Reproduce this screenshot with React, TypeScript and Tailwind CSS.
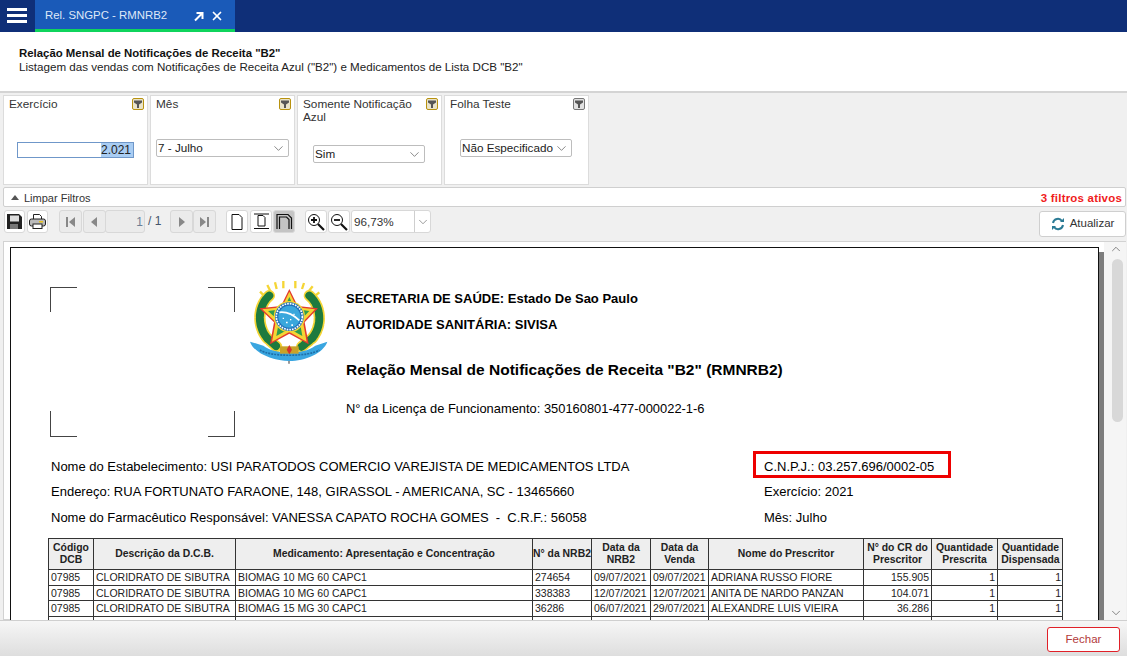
import React from "react";
import { X, ChevronDown, ChevronUp } from "lucide-react";

function Funnel({ on }: { on: boolean }) {
  return (
    <div className={`absolute right-[3px] top-[2px] w-[12px] h-[12px] rounded-[2px] border flex items-center justify-center ${on ? "border-[#b8920f] bg-[#e9e3c9]" : "border-[#777] bg-[#e2e2e2]"}`}>
      <svg width="8" height="8" viewBox="0 0 8 8"><path d="M0 0.5h8v2L5 4.5V8H3V4.5L0 2.5z" fill="#555" /></svg>
    </div>
  );
}

function Select({ label, className }: { label: string; className: string }) {
  return (
    <div className={`absolute h-[18px] bg-white border border-[#bdbdbd] rounded-[2px] flex items-center justify-between pl-[1px] pr-[2px] text-[11.7px] text-[#222] ${className}`}>
      <span className="whitespace-nowrap">{label}</span>
      <ChevronDown size={15} strokeWidth={1} className="text-[#444] shrink-0" />
    </div>
  );
}

function Card({ className, on, title, children }: { className: string; on: boolean; title: React.ReactNode; children: React.ReactNode }) {
  return (
    <div className={`absolute top-[95px] h-[90px] bg-white border border-[#dcdcdc] ${className}`}>
      <div className="absolute left-[5px] top-[2px] text-[11.8px] leading-[13px] text-[#333] w-[120px]">{title}</div>
      <Funnel on={on} />
      {children}
    </div>
  );
}

function Btn({ className, children, dim }: { className: string; children: React.ReactNode; dim?: boolean }) {
  return (
    <div className={`absolute top-[210px] h-[23px] rounded-[3px] border border-[#d8d8d8] flex items-center justify-center ${dim ? "bg-[#ebebeb]" : "bg-white"} ${className}`}>
      {children}
    </div>
  );
}

const cols = ["w-[45px]", "w-[142px]", "w-[297px]", "w-[59px]", "w-[59px]", "w-[58px]", "w-[155px]", "w-[68px]", "w-[66px]", "w-[65px]"];
const head = ["Código DCB", "Descrição da D.C.B.", "Medicamento: Apresentação e Concentração", "N° da NRB2", "Data da NRB2", "Data da Venda", "Nome do Prescritor", "N° do CR do Prescritor", "Quantidade Prescrita", "Quantidade Dispensada"];
const rows = [
  ["07985", "CLORIDRATO DE SIBUTRA", "BIOMAG 10 MG 60 CAPC1", "274654", "09/07/2021", "09/07/2021", "ADRIANA RUSSO FIORE", "155.905", "1", "1"],
  ["07985", "CLORIDRATO DE SIBUTRA", "BIOMAG 10 MG 60 CAPC1", "338383", "12/07/2021", "12/07/2021", "ANITA DE NARDO PANZAN", "104.071", "1", "1"],
  ["07985", "CLORIDRATO DE SIBUTRA", "BIOMAG 15 MG 30 CAPC1", "36286", "06/07/2021", "29/07/2021", "ALEXANDRE LUIS VIEIRA", "36.286", "1", "1"],
  ["07985", "CLORIDRATO DE SIBUTRA", "BIOMAG 10 MG 60 CAPC1", "350067", "14/07/2021", "14/07/2021", "NICACIO DALLO", "67.400", "1", "1"],
];

function Emblem() {
  return (
    <svg className="absolute left-[230px] top-[275px]" width="100" height="95" viewBox="0 0 300 285">
      <path d="M122 50 L112 30 M140 42 L135 22 M160 40 L160 18 M196 40 L196 18 M216 42 L222 24 M235 50 L248 34 M105 65 L90 50 M252 65 L268 52" stroke="#f5d535" strokeWidth="7" />
      <path d="M118 62 C85 90 78 150 112 190 L140 215" stroke="#f5d535" strokeWidth="34" fill="none" strokeLinecap="round" strokeDasharray="14 5" />
      <path d="M238 62 C272 90 280 150 246 190 L215 215" stroke="#f5d535" strokeWidth="34" fill="none" strokeLinecap="round" strokeDasharray="14 5" />
      <path d="M118 62 C85 90 78 150 112 190 L140 215" stroke="#1d7a3e" strokeWidth="24" fill="none" strokeLinecap="round" strokeDasharray="11 4" />
      <path d="M238 62 C272 90 280 150 246 190 L215 215" stroke="#1d7a3e" strokeWidth="24" fill="none" strokeLinecap="round" strokeDasharray="11 4" />
      <path d="M178 42 L203 93 L264 100 L224 142 L236 208 L178 176 L120 208 L132 142 L88 100 L153 93 Z" fill="#e33b2e" />
      <path d="M178 50 L200 97 L255 103 L219 141 L230 200 L178 171 L126 200 L137 141 L97 103 L156 97 Z" fill="#f5d535" />
      <path d="M178 66 L194 102 L238 108 L209 138 L217 183 L178 161 L139 183 L147 138 L114 108 L162 102 Z" fill="#2f9e4d" />
      <circle cx="178" cy="125" r="47" fill="#f5d535" />
      <circle cx="178" cy="125" r="43" fill="#1f6fb8" />
      <circle cx="178" cy="125" r="39" fill="none" stroke="#fff" strokeWidth="5" strokeDasharray="5 3" />
      <circle cx="178" cy="125" r="33" fill="#39a7dc" />
      <path d="M148 112 Q178 108 208 136" stroke="#fff" strokeWidth="5" fill="none" />
      <path d="M168 140h5v5h-5z M184 148h5v5h-5z M190 116h4v4h-4z M158 128h4v4h-4z M180 132h4v4h-4z" fill="#fff" />
      <path d="M60 200 L100 212 C120 228 150 232 178 232 C206 232 236 228 256 212 L292 200 C280 235 225 258 178 258 C130 258 72 235 60 200 Z" fill="#3aa6e0" />
      <path d="M90 225 C120 246 236 246 268 225" stroke="#1e6fa8" strokeWidth="5" fill="none" strokeDasharray="6 3" />
      <rect x="150" y="214" width="56" height="22" fill="#c9a227" />
      <path d="M178 210 L186 224 L178 238 L170 224 Z" fill="#d5342b" />
      <path d="M174 258h6v8h-6z" fill="#999" />
    </svg>
  );
}

export default function App() {
  const line = "absolute bg-[#444]";
  return (
    <div className="relative w-[1127px] h-[656px] overflow-hidden bg-[#f0f0f0] [font-family:Liberation_Sans,Arial,sans-serif]">
      {/* top bar */}
      <div className="absolute left-0 top-0 w-full h-[32px] bg-[#0f2f78]">
        <div className="absolute left-[7px] top-[8px] w-[20px] flex flex-col gap-[3px]">
          <div className="h-[3px] bg-white" /><div className="h-[3px] bg-white" /><div className="h-[3px] bg-white" />
        </div>
        <div className="absolute left-[35px] top-0 w-[200px] h-[32px] bg-[#1a5ab8] border-b-[3px] border-[#0fd45c]">
          <span className="absolute left-[10px] top-[8px] text-[11.4px] leading-[14px] text-[#dfe8f7]">Rel. SNGPC - RMNRB2</span>
          <svg className="absolute left-[158px] top-[11px]" width="11" height="11" viewBox="0 0 11 11"><path d="M2 9.5 L8.5 3 M3.5 2 H9.5 V8" stroke="#fff" strokeWidth="2" fill="none" /></svg>
          <X size={14} strokeWidth={3} className="absolute left-[175px] top-[9px] text-white" />
        </div>
      </div>

      {/* subtitle */}
      <div className="absolute left-0 top-[32px] w-full h-[61px] bg-white border-b-2 border-[#d4d4d4]">
        <div className="absolute left-[19px] top-[14px] text-[11.4px] leading-[14px] font-bold text-[#111] whitespace-nowrap">Relação Mensal de Notificações de Receita "B2"</div>
        <div className="absolute left-[19px] top-[28px] text-[11.6px] leading-[14px] text-[#222] whitespace-nowrap">Listagem das vendas com Notificações de Receita Azul ("B2") e Medicamentos de Lista DCB "B2"</div>
      </div>

      {/* filters */}
      <Card className="left-[3px] w-[145px]" on title="Exercício">
        <div className="absolute left-[13px] top-[46px] w-[117px] h-[16px] border border-[#6f97c9] bg-white flex justify-end text-[12px] leading-[14px] text-[#222]">
          <span className="bg-[#a9cdf3] pr-[2px]">2.021</span>
        </div>
      </Card>
      <Card className="left-[150px] w-[145px]" on title="Mês">
        <Select label="7 - Julho" className="left-[5px] top-[43px] w-[133px]" />
      </Card>
      <Card className="left-[297px] w-[145px]" on title="Somente Notificação Azul">
        <Select label="Sim" className="left-[15px] top-[49px] w-[112px]" />
      </Card>
      <Card className="left-[444px] w-[145px]" on={false} title="Folha Teste">
        <Select label="Não Especificado" className="left-[15px] top-[43px] w-[112px]" />
      </Card>

      {/* limpar */}
      <div className="absolute left-[3px] top-[187px] w-[1123px] h-[20px] bg-white border border-[#cfcfcf] rounded-[2px] text-[11px]">
        <div className="absolute left-[7px] top-[7px] w-0 h-0 border-l-[4px] border-r-[4px] border-b-[5px] border-l-transparent border-r-transparent border-b-[#555]" />
        <span className="absolute left-[20px] top-[2px] text-[#333]">Limpar Filtros</span>
        <span className="absolute right-[3px] top-[2px] text-[11.5px] text-[#f01c1c] font-bold tracking-[0.2px]">3 filtros ativos</span>
      </div>

      {/* toolbar */}
      <Btn className="left-[4px] w-[21px]">
        <svg width="15" height="15" viewBox="0 0 15 15"><path d="M0 0h12l3 3v12H0z" fill="#222" /><rect x="3" y="1.5" width="9" height="6" fill="#ddd" /><rect x="3" y="10" width="8" height="5" fill="#777" /></svg>
      </Btn>
      <Btn className="left-[27px] w-[21px]">
        <svg width="17" height="15" viewBox="0 0 17 15"><path d="M4.5 5V.5h6l2 2V5" fill="#fff" stroke="#222" /><rect x="0.5" y="5" width="16" height="7" rx="2" fill="#bbb" stroke="#222" /><rect x="4" y="10" width="9" height="4.5" fill="#fff" stroke="#222" /><rect x="10" y="7" width="4" height="1.5" fill="#e6c21a" /></svg>
      </Btn>
      <Btn dim className="left-[59px] w-[23px]"><svg width="9" height="10" viewBox="0 0 9 10"><rect width="2" height="10" fill="#888" /><path d="M9 0v10L3 5z" fill="#888" /></svg></Btn>
      <Btn dim className="left-[83px] w-[23px]"><svg width="7" height="10" viewBox="0 0 7 10"><path d="M6 0v10L0 5z" fill="#888" /></svg></Btn>
      <Btn dim className="left-[105px] w-[40px] justify-end pr-[1px]"><span className="text-[12px] text-[#6d7f96]">1</span></Btn>
      <span className="absolute left-[148px] top-[214px] text-[12px] leading-[15px] text-[#44556b]">/ 1</span>
      <Btn dim className="left-[170px] w-[23px]"><svg width="7" height="10" viewBox="0 0 7 10"><path d="M1 0v10L7 5z" fill="#888" /></svg></Btn>
      <Btn dim className="left-[193px] w-[23px]"><svg width="9" height="10" viewBox="0 0 9 10"><path d="M0 0v10L6 5z" fill="#888" /><rect x="7" width="2" height="10" fill="#888" /></svg></Btn>
      <Btn className="left-[226px] w-[22px]"><svg width="12" height="16" viewBox="0 0 12 16"><path d="M1 .5h7l3 3V15.5H1z" fill="#fff" stroke="#111" /></svg></Btn>
      <Btn className="left-[250px] w-[22px]"><svg width="17" height="17" viewBox="0 0 17 17"><path d="M5 2.5h5l2 2V13H5z" fill="#fff" stroke="#111" /><path d="M1 1h15M1 15.5h15" stroke="#111" /></svg></Btn>
      <Btn className="left-[273px] w-[22px] !bg-[#c4c4c4]"><svg width="17" height="17" viewBox="0 0 17 17"><path d="M1 16V1.5H12L15.5 5V16" fill="none" stroke="#111" strokeWidth="1.2" /><path d="M3.5 16V4h7l2.5 2.5V16" fill="none" stroke="#111" strokeWidth="1.2" /></svg></Btn>
      <Btn className="left-[305px] w-[22px]"><svg width="18" height="18" viewBox="0 0 18 18"><circle cx="7" cy="7" r="5.5" fill="#fff" stroke="#111" /><path d="M4 7h6M7 4v6" stroke="#111" strokeWidth="1.8" /><path d="M11 11l6 6" stroke="#111" strokeWidth="2.2" /></svg></Btn>
      <Btn className="left-[328px] w-[22px]"><svg width="18" height="18" viewBox="0 0 18 18"><circle cx="7" cy="7" r="5.5" fill="#fff" stroke="#111" /><path d="M4 7h6" stroke="#111" strokeWidth="1.8" /><path d="M11 11l6 6" stroke="#111" strokeWidth="2.2" /></svg></Btn>
      <Btn className="left-[351px] w-[80px] justify-start pl-[2px]">
        <span className="text-[11.7px] text-[#333]">96,73%</span>
        <div className="absolute right-0 top-0 w-[16px] h-full border-l border-[#cfcfcf] flex items-center justify-center"><ChevronDown size={14} strokeWidth={1} className="text-[#555]" /></div>
      </Btn>
      <div className="absolute left-[1039px] top-[211px] w-[87px] h-[26px] bg-white border border-[#cfcfcf] rounded-[3px] flex items-center justify-center gap-[5px] text-[11.5px] text-[#333]">
        <svg width="14" height="14" viewBox="0 0 14 14" fill="none" stroke="#2a7a94" strokeWidth="2"><path d="M2 6a5 5 0 0 1 9-2" /><path d="M12 8a5 5 0 0 1-9 2" /><path d="M13 1v4H9z M1 13V9h4z" fill="#2a7a94" stroke="none" /></svg>
        <span>Atualizar</span>
      </div>

      {/* report viewer */}
      <div className="absolute left-[3px] top-[241px] w-[1123px] h-[379px] bg-white border border-[#d2d2d2]" />
      <div className="absolute left-[10px] top-[247px] w-[1089px] h-[373px] bg-white border-l border-t border-r border-[#111]" />
      <div className="absolute left-[1099px] top-[252px] w-[5px] h-[368px] bg-[#7d7d7d]" />
      <div className="absolute left-[1104px] top-[242px] w-[22px] h-[378px] bg-[#f5f5f5]">
        <ChevronUp size={14} strokeWidth={1.2} className="absolute left-[5px] top-[0px] text-[#555]" />
        <div className="absolute left-[8px] top-[17px] w-[11px] h-[163px] rounded-[6px] bg-[#d8d8d8]" />
        <ChevronDown size={14} strokeWidth={1.2} className="absolute left-[5px] top-[364px] text-[#555]" />
      </div>

      {/* crop marks */}
      <div className={`${line} left-[50px] top-[287px] w-[27px] h-[1px]`} />
      <div className={`${line} left-[50px] top-[287px] w-[1px] h-[25px]`} />
      <div className={`${line} left-[208px] top-[287px] w-[27px] h-[1px]`} />
      <div className={`${line} left-[234px] top-[287px] w-[1px] h-[25px]`} />
      <div className={`${line} left-[50px] top-[436px] w-[27px] h-[1px]`} />
      <div className={`${line} left-[50px] top-[411px] w-[1px] h-[26px]`} />
      <div className={`${line} left-[208px] top-[436px] w-[27px] h-[1px]`} />
      <div className={`${line} left-[234px] top-[411px] w-[1px] h-[26px]`} />

      <Emblem />

      <div className="text-black">
        <div className="absolute left-[346px] top-[291px] text-[13px] leading-[15px] font-bold whitespace-nowrap">SECRETARIA DE SAÚDE: Estado De Sao Paulo</div>
        <div className="absolute left-[346px] top-[317px] text-[13px] leading-[15px] font-bold whitespace-nowrap">AUTORIDADE SANITÁRIA: SIVISA</div>
        <div className="absolute left-[346px] top-[361px] text-[15.5px] leading-[18px] font-bold whitespace-nowrap">Relação Mensal de Notificações de Receita "B2" (RMNRB2)</div>
        <div className="absolute left-[346px] top-[401px] text-[12.9px] leading-[15px] whitespace-nowrap">N° da Licença de Funcionamento: 350160801-477-000022-1-6</div>
        <div className="absolute left-[51px] top-[459px] text-[13px] leading-[15px] whitespace-nowrap">Nome do Estabelecimento: USI PARATODOS COMERCIO VAREJISTA DE MEDICAMENTOS LTDA</div>
        <div className="absolute left-[51px] top-[484px] text-[13px] leading-[15px] whitespace-nowrap">Endereço: RUA FORTUNATO FARAONE, 148, GIRASSOL - AMERICANA, SC - 13465660</div>
        <div className="absolute left-[51px] top-[510px] text-[13px] leading-[15px] whitespace-pre">Nome do Farmacêutico Responsável: VANESSA CAPATO ROCHA GOMES  -  C.R.F.: 56058</div>
        <div className="absolute left-[753px] top-[451px] w-[198px] h-[27px] border-[3px] border-[#ee0000]" />
        <div className="absolute left-[764px] top-[459px] text-[13px] leading-[15px] whitespace-nowrap">C.N.P.J.: 03.257.696/0002-05</div>
        <div className="absolute left-[764px] top-[484px] text-[13px] leading-[15px] whitespace-nowrap">Exercício: 2021</div>
        <div className="absolute left-[764px] top-[510px] text-[13px] leading-[15px] whitespace-nowrap">Mês: Julho</div>

        {/* table */}
        <div className="absolute left-[48px] top-[538px] w-[1015px] h-[82px] overflow-hidden border-l border-t border-r border-[#333]">
          <div className="flex h-[31px] bg-[#eeeeee] border-b border-[#333]">
            {head.map((h, i) => (
              <div key={i} className={`${cols[i]} shrink-0 flex items-center justify-center text-center border-r border-[#333] last:border-r-0 text-[10.4px] leading-[12px] font-bold text-[#222]`}>
                <span className={i === 3 ? "whitespace-nowrap" : ""}>{h}</span>
              </div>
            ))}
          </div>
          {rows.map((r, ri) => (
            <div key={ri} className="flex h-[15.5px] border-b border-[#333]">
              {r.map((c, i) => (
                <div key={i} className={`${cols[i]} shrink-0 px-[2px] border-r border-[#333] last:border-r-0 text-[10.5px] leading-[14.5px] text-[#222] whitespace-nowrap overflow-hidden ${i >= 7 ? "text-right" : ""}`}>
                  {c}
                </div>
              ))}
            </div>
          ))}
        </div>
      </div>

      {/* footer */}
      <div className="absolute left-0 top-[620px] w-full h-[36px] bg-gradient-to-b from-[#f6f6f6] to-[#dedede] border-t border-[#cfcfcf]">
        <div className="absolute left-[1047px] top-[6px] w-[73px] h-[25px] bg-white border border-[#e02028] rounded-[3px] flex items-center justify-center text-[11.5px] text-[#b23a3a]">Fechar</div>
      </div>
    </div>
  );
}
